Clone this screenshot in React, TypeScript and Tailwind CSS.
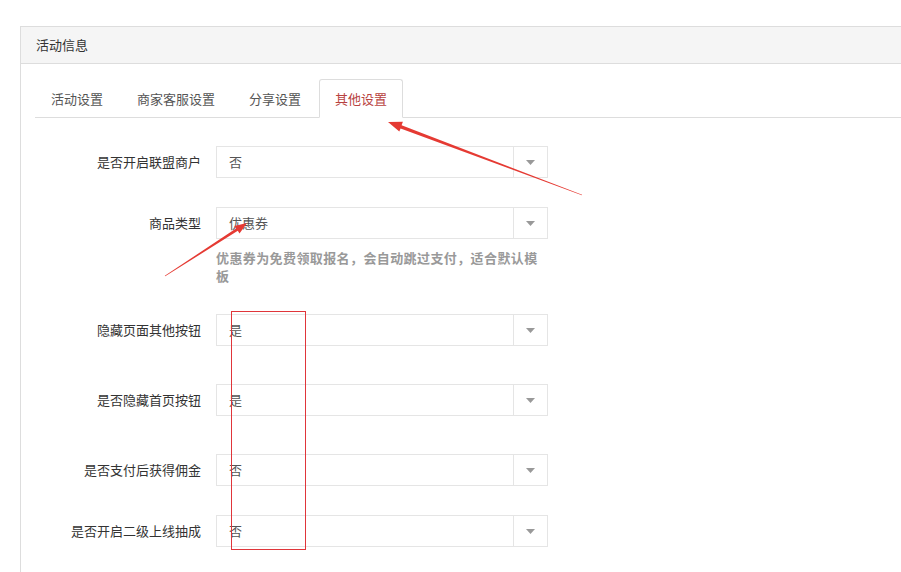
import React from "react";

const TABS = ["活动设置", "商家客服设置", "分享设置", "其他设置"];
const ACTIVE = 3;

type Row = { label: string; value: string; mt: string; help?: string };

const ROWS: Row[] = [
  { label: "是否开启联盟商户", value: "否", mt: "mt-[28px]" },
  {
    label: "商品类型",
    value: "优惠券",
    mt: "mt-[29px]",
    help: "优惠券为免费领取报名，会自动跳过支付，适合默认模板",
  },
  { label: "隐藏页面其他按钮", value: "是", mt: "mt-[29px]" },
  { label: "是否隐藏首页按钮", value: "是", mt: "mt-[38px]" },
  { label: "是否支付后获得佣金", value: "否", mt: "mt-[38px]" },
  { label: "是否开启二级上线抽成", value: "否", mt: "mt-[29px]" },
];

const FakeSelect = ({ value }: { value: string }) => (
  <div className="flex h-[32px] w-[332px] items-center border border-[#e5e5e5] bg-white">
    <span className="flex-1 pl-[12px] text-[13px] text-[#555]">{value}</span>
    <span className="flex h-full w-[34px] items-center justify-center border-l border-[#e5e5e5]">
      <svg width="9" height="5" viewBox="0 0 9 5">
        <path d="M0 0h9L4.5 5z" fill="#999" />
      </svg>
    </span>
  </div>
);

export default function App() {
  return (
    <div
      className="relative h-[572px] w-[901px] overflow-hidden bg-white text-[#333]"
      style={{ fontFamily: '"Noto Sans CJK SC", "Noto Sans", sans-serif' }}
    >
      <div className="ml-[20px] mt-[26px] h-[600px] w-[920px] border border-[#ddd]">
        <div className="flex h-[37px] items-center border-b border-[#ddd] bg-[#f5f5f5] px-[15px] text-[13px] text-[#333]">
          活动信息
        </div>
        <div className="pl-[14px] pt-[15px]">
          <div className="flex border-b border-[#ddd]">
            {TABS.map((tab, i) => (
              <div
                key={tab}
                className={`-mb-px mr-[2px] h-[39px] rounded-t-[3px] border px-[15px] text-[13px] leading-[37px] ${
                  i === ACTIVE
                    ? "border-[#ddd] border-b-white bg-white text-[#b8423f]"
                    : "border-transparent text-[#555]"
                }`}
              >
                {tab}
              </div>
            ))}
          </div>

          <div className="flex flex-col">
            {ROWS.map((row) => (
              <div key={row.label} className={row.mt}>
                <div className="flex items-center">
                  <div className="w-[181px] pr-[15px] text-right text-[13px] text-[#333]">
                    {row.label}
                  </div>
                  <FakeSelect value={row.value} />
                </div>
                {row.help ? (
                  <div className="ml-[181px] mt-[10px] w-[332px] text-[13px] font-bold leading-[18px] tracking-[0.4px] text-[#999]">
                    {row.help}
                  </div>
                ) : null}
              </div>
            ))}
          </div>
        </div>
      </div>

      {/* red annotations drawn over the screenshot */}
      <svg
        className="pointer-events-none absolute left-0 top-0"
        width="901"
        height="572"
        viewBox="0 0 901 572"
      >
        <polygon
          points="582.1,194.7 401.6,125.2 402.9,121.7 388,122 399.3,131.6 400.6,128.6 581.9,195.3"
          fill="#e53a33"
        />
        <polygon
          points="165.2,276.3 237.8,230.8 239.5,233.6 247,223 234.3,225.9 236,228.6 164.8,275.7"
          fill="#e53a33"
        />
      </svg>
      <div className="pointer-events-none absolute left-[231px] top-[311px] h-[239px] w-[75px] border border-[#e0353a]" />
    </div>
  );
}
